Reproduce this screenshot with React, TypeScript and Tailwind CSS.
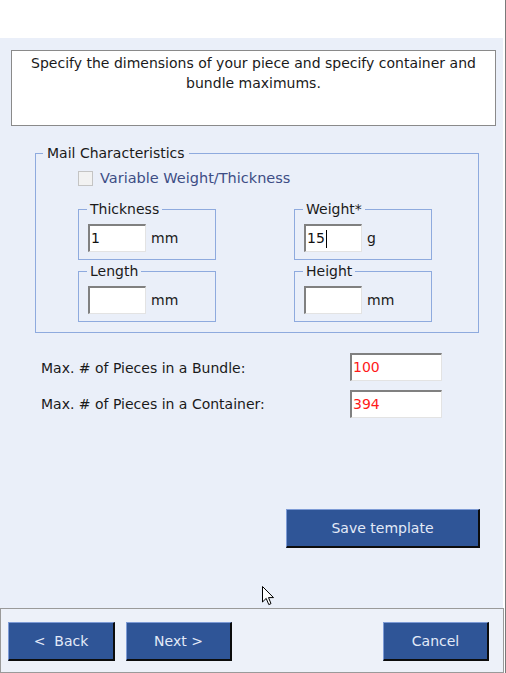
import React from "react";

const font = { fontFamily: '"DejaVu Sans", Verdana, sans-serif' };

const Btn = ({ label, w }: { label: string; w: string }) => (
  <button
    className={`${w} h-[39px] bg-[#2f5597] text-[#e3eaf7] text-[14px] whitespace-pre border-t border-l border-t-[#7d9bd6] border-l-[#7d9bd6] border-b-2 border-r-2 border-b-[#0c0c0c] border-r-[#0c0c0c] flex items-center justify-center`}
  >
    {label}
  </button>
);

const Field = ({ value, w, red, caret }: { value: string; w: string; red?: boolean; caret?: boolean }) => (
  <div
    className={`${w} h-[28px] bg-white border-t-2 border-l-2 border-t-[#808080] border-l-[#808080] border-b border-r border-b-[#e3e3e3] border-r-[#e3e3e3] flex items-center pl-[1px] text-[14px] ${
      red ? "text-[#ff1a1a]" : "text-[#111]"
    }`}
  >
    {value}
    {caret && <span className="w-px h-[18px] bg-black ml-[1px]" />}
  </div>
);

const DimBox = ({ title, value, unit, caret }: { title: string; value: string; unit: string; caret?: boolean }) => (
  <fieldset className="w-[138px] border border-[#8eaade]">
    <legend className="ml-[8px] px-[3px] text-[14px] leading-[20px] text-[#1a1a1a]">{title}</legend>
    <div className="flex items-center gap-[5px] mt-[5px] pl-[9px] pb-[7px]">
      <Field value={value} w="w-[58px]" caret={caret} />
      <span className="text-[14px] text-[#1a1a1a]">{unit}</span>
    </div>
  </fieldset>
);

const Cursor = () => (
  <svg className="absolute left-[262px] top-[586px]" width="13" height="20" viewBox="0 0 13 20">
    <path
      d="M0.5 0.5 L0.5 16 L4.2 12.4 L6.8 18.6 L9 17.6 L6.5 11.6 L11.5 11.6 Z"
      fill="white"
      stroke="black"
      strokeWidth="1"
      strokeLinejoin="miter"
    />
  </svg>
);

export default function App() {
  return (
    <div className="relative w-[506px] h-[673px] bg-white border-r border-[#7a7a7a] flex flex-col" style={font}>
      <div className="h-[38px] shrink-0" />

      <div className="flex-1 w-[503px] bg-[#eaeff9] pt-[12px] flex flex-col">
        <div className="ml-[11px] w-[485px] h-[76px] bg-white border border-[#8a8a8a] pt-[2px] text-center text-[14px] leading-[20px] text-[#1a1a1a]">
          Specify the dimensions of your piece and specify container and
          <br />
          bundle maximums.
        </div>

        <fieldset className="ml-[35px] mt-[17px] w-[444px] border border-[#8eaade]">
          <legend className="ml-[7px] px-[4px] text-[14px] leading-[20px] text-[#1a1a1a]">Mail Characteristics</legend>
          <div className="pl-[42px] pb-[10px]">
            <div className="flex items-center gap-[7px] mt-[8px] h-[15px]">
              <span className="w-[15px] h-[15px] border border-[#c4c4c4] bg-[#f2f2f2]" />
              <span className="text-[14.5px] text-[#3d4d85]">Variable Weight/Thickness</span>
            </div>
            <div className="grid grid-cols-[138px_138px] gap-x-[78px] gap-y-px mt-[13px]">
              <DimBox title="Thickness" value="1" unit="mm" />
              <DimBox title="Weight*" value="15" unit="g" caret />
              <DimBox title="Length" value="" unit="mm" />
              <DimBox title="Height" value="" unit="mm" />
            </div>
          </div>
        </fieldset>

        <div className="mt-[20px] ml-[41px] flex flex-col gap-[9px] text-[14px] text-[#1a1a1a]">
          <div className="flex items-center">
            <span className="w-[309px] pt-[3px]">Max. # of Pieces in a Bundle:</span>
            <Field value="100" w="w-[92px]" red />
          </div>
          <div className="flex items-center">
            <span className="w-[309px]">Max. # of Pieces in a Container:</span>
            <Field value="394" w="w-[92px]" red />
          </div>
        </div>

        <div className="mt-[91px] ml-[286px]">
          <Btn label="Save template" w="w-[194px]" />
        </div>
      </div>

      <div className="h-[65px] w-[504px] shrink-0 bg-[#edf1f9] border border-[#9a9a9a] pt-[13px] pl-[7px] flex">
        <div className="flex gap-[11px]">
          <Btn label="<  Back" w="w-[107px]" />
          <Btn label="Next >" w="w-[106px]" />
        </div>
        <div className="ml-[151px]">
          <Btn label="Cancel" w="w-[106px]" />
        </div>
      </div>

      <Cursor />
    </div>
  );
}
